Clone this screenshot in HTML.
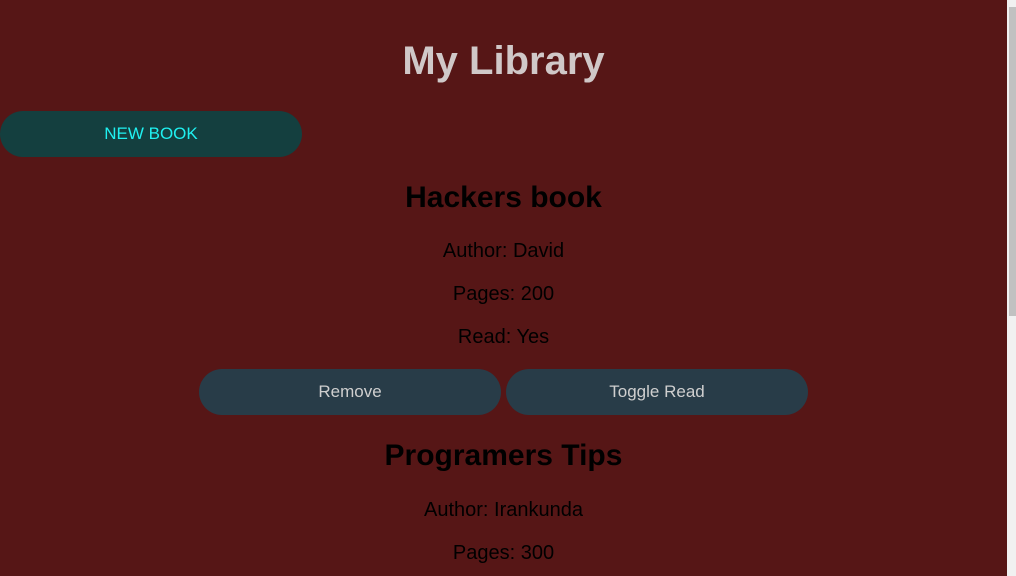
<!DOCTYPE html>
<html><head><style>
body{margin:0;width:1016px;height:576px;overflow:hidden;background:#561616;font-family:"Liberation Sans",sans-serif;position:relative}
.c{position:absolute;left:0;width:1007px;text-align:center;margin:0}
h1{font-size:40px;font-weight:bold;color:#d0c8c8}
h2{font-size:30px;font-weight:bold;color:#000}
p{font-size:20px;color:#000}
.btn{position:absolute;height:46px;border-radius:23px;font-size:17px;text-align:center;line-height:46px}
.sb{position:absolute;left:1007px;top:0;width:9px;height:576px;background:#f1f1f1}
.th{position:absolute;left:1009px;top:7px;width:7px;height:309px;background:#c1c1c1}
</style></head><body>
<h1 class="c" style="top:38px;line-height:46px">My Library</h1>
<div class="btn" style="left:0;top:111px;width:302px;background:#143f3f;color:#1ff0f0">NEW BOOK</div>
<h2 class="c" style="top:180px;line-height:36px">Hackers book</h2>
<p class="c" style="top:239px;line-height:24px">Author: David</p>
<p class="c" style="top:282px;line-height:24px">Pages: 200</p>
<p class="c" style="top:325px;line-height:24px">Read: Yes</p>
<div class="btn" style="left:199px;top:369px;width:302px;background:#283c48;color:#cfcfcf">Remove</div>
<div class="btn" style="left:506px;top:369px;width:302px;background:#283c48;color:#cfcfcf">Toggle Read</div>
<h2 class="c" style="top:438px;line-height:36px">Programers Tips</h2>
<p class="c" style="top:498px;line-height:24px">Author: Irankunda</p>
<p class="c" style="top:541px;line-height:24px">Pages: 300</p>
<div class="sb"></div><div class="th"></div>
</body></html>
